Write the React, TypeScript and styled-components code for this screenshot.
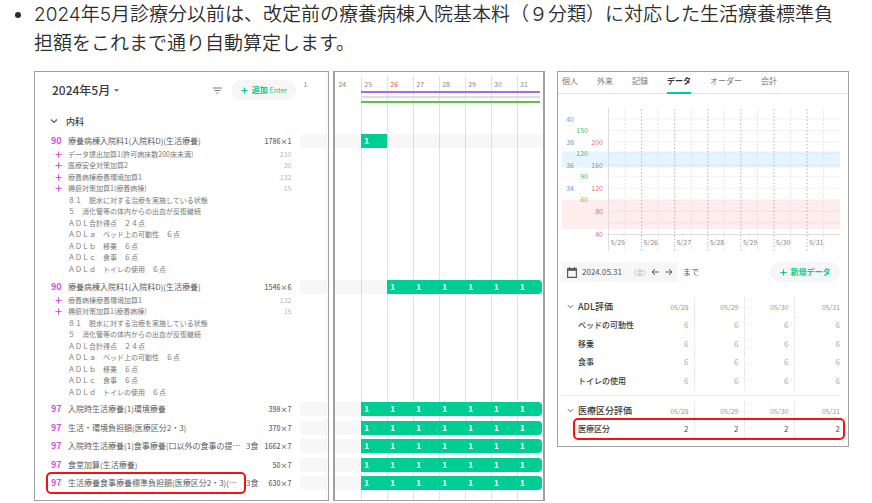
import React from "react";
import styled, { createGlobalStyle } from "styled-components";

const GREEN = "#00cd92";
const PINK = "#d64fe0";

const GlobalStyle = createGlobalStyle`
  * { box-sizing: border-box; }
  body {
    margin: 0;
    background: #fff;
    color: #3a3a3a;
    font-family: "Noto Sans CJK JP", sans-serif;
  }
  button, input { font: inherit; color: inherit; border: 0; padding: 0; margin: 0; background: none; }
  button { cursor: pointer; }
`;

/* ---------- page ---------- */

const Page = styled.main`
  padding: 0 23px 1px 34px;
`;

const NoteList = styled.ul`
  margin: 0 0 13px;
  padding: 0;
  font-family: Inter, "Noto Sans CJK JP", sans-serif;
  font-size: 19px;
  line-height: 29px;
  font-weight: 350;
  color: #2c2c2c;
`;

const Panels = styled.div`
  display: grid;
  grid-template-columns: minmax(0, 511fr) minmax(0, 292fr);
  align-items: start;
  gap: 12px;
`;

const OrderPanels = styled.div`
  display: grid;
  grid-template-columns: minmax(0, 296fr) minmax(0, 212fr);
  gap: 4px;
`;

const Panel = styled.section<{ $side?: number }>`
  border: 1px solid #a0a0a0;
  border-width: 1px ${(p) => p.$side ?? 1}px;
`;

const Highlight = styled.span<{ $inset: string }>`
  position: absolute;
  inset: ${(p) => p.$inset};
  border: 2px solid #f01414;
  border-radius: 5px;
  pointer-events: none;
`;

/* ---------- order list ---------- */

const OrderBody = styled.div`
  height: 100%;
  margin-right: 1px;
  padding-bottom: 10px;
  border-right: 1px solid #efefef;
`;

const OrderHeader = styled.header`
  display: flex;
  align-items: center;
  height: 36px;
  padding-left: 17px;
`;

const MonthButton = styled.button`
  display: flex;
  align-items: center;
  gap: 4px;
  margin-right: auto;
  font-size: 12px;
  line-height: 18px;
  font-weight: 500;
`;

const IconButton = styled.button`
  display: flex;
  align-items: center;
  justify-content: center;
  color: #777;
`;

const PillButton = styled.button<{ $width: number }>`
  display: flex;
  align-items: center;
  justify-content: center;
  gap: 4px;
  width: ${(p) => p.$width}px;
  height: 20px;
  border-radius: 10px;
  background: #f6f6f6;
  color: ${GREEN};
  font-size: 8px;
  line-height: 12px;
  font-weight: 700;
`;

const KeyHint = styled.small`
  font-size: 7px;
  font-weight: 400;
`;

const FilterSlot = styled.div`
  margin-right: 9px;
`;

const FirstDay = styled.span`
  width: 25px;
  margin-left: 5px;
  padding-left: 2px;
  height: 24px;
  font-size: 7px;
  line-height: 12px;
  color: #888;
`;

const Department = styled.h2`
  display: flex;
  align-items: center;
  gap: 8px;
  height: 26px;
  margin: 0;
  padding-left: 15px;
  font-size: 9px;
  font-weight: 500;
`;

const Orders = styled.ul`
  margin: 0;
  padding: 0;
  list-style: none;
`;

const OrderItem = styled.li`
  margin-top: 4px;
  &:first-child { margin-top: 0; }
  &:nth-child(even) { margin-top: 5px; }
`;

const OrderRow = styled.div`
  position: relative;
  display: flex;
  align-items: center;
  height: 14px;
  padding-left: 16px;
  font-size: 8px;
  line-height: 14px;
  white-space: nowrap;
`;

const Code = styled.span`
  width: 17px;
  color: ${PINK};
  font-size: 9px;
  font-weight: 700;
`;

const OrderName = styled.span`
  flex: 1;
  min-width: 0;
  color: #5c5c5c;
`;

const Count = styled.span`
  min-width: 33px;
  color: #666;
  font-size: 7px;
  font-weight: 500;
  text-align: right;
`;

const Meals = styled.span`
  color: #666;
`;

const DayStrip = styled.span`
  width: 26px;
  height: 14px;
  margin-left: 9px;
  border-radius: 3px 0 0 3px;
  background: #f7f7f7;
`;

const Details = styled.ul`
  margin: 0;
  padding: 0 35px 0 20px;
  list-style: none;
`;

const Detail = styled.li`
  display: flex;
  align-items: center;
  height: 12px;
  font-size: 7px;
  line-height: 11px;
  color: #777;
  white-space: pre;
  &:nth-child(even) { height: 11px; }
`;

const DetailMark = styled.span`
  display: flex;
  width: 13px;
  color: ${PINK};
`;

const Points = styled.span`
  margin-left: auto;
  color: #b5b5b5;
`;

/* ---------- calendar ---------- */

const Calendar = styled.div`
  display: grid;
  height: 100%;
`;

const DayColumns = styled.div`
  grid-area: 1 / 1;
  display: grid;
  grid-template-columns: repeat(8, 1fr);
  padding-top: 4px;
`;

const DayColumn = styled.div<{ $holiday?: boolean }>`
  padding-left: 2px;
  border-left: 1px solid #e3e3e3;
  font-size: 7px;
  line-height: 17px;
  color: ${(p) => (p.$holiday ? "#e05555" : "#888")};
  &:first-child { border-left-color: transparent; }
`;

const CalendarRows = styled.div`
  grid-area: 1 / 1;
  padding-top: 19px;
`;

const Periods = styled.div`
  display: grid;
  gap: 3px;
  height: 43px;
  align-content: start;
  margin: 0 3px 0 12.5%;
`;

const Period = styled.div<{ $color: string }>`
  height: 2px;
  background: ${(p) => p.$color};
`;

const CalendarRow = styled.div<{ $gap: number }>`
  display: grid;
  grid-template-columns: repeat(8, 1fr);
  height: 14px;
  margin-top: ${(p) => p.$gap}px;
  background: rgba(0, 0, 0, 0.03);
`;

const Dose = styled.span<{ $day: number; $last: boolean }>`
  grid-column: ${(p) => p.$day};
  grid-row: 1;
  padding-left: 3px;
  margin-right: ${(p) => (p.$last ? 1 : 0)}px;
  border-radius: ${(p) => (p.$last ? "0 4px 4px 0" : "0")};
  background: ${GREEN};
  color: #fff;
  font-size: 8px;
  line-height: 14px;
  font-weight: 700;
`;

/* ---------- data panel ---------- */

const Tabs = styled.nav`
  display: flex;
  gap: 19px;
  height: 22px;
  padding-left: 4px;
  border-bottom: 1px solid #e0e0e0;
`;

const Tab = styled.a<{ $active?: boolean }>`
  height: 22px;
  border-bottom: 2px solid ${(p) => (p.$active ? GREEN : "transparent")};
  color: ${(p) => (p.$active ? "#333" : "#777")};
  font-size: 8px;
  line-height: 17px;
  font-weight: ${(p) => (p.$active ? 700 : 400)};
  text-decoration: none;
  white-space: nowrap;
`;

const DataBody = styled.div`
  padding: 4px 8px 8px 4px;
`;

const Chart = styled.svg`
  display: block;
  width: 100%;
  height: auto;
  font-size: 7px;
`;

const DateBar = styled.div`
  display: flex;
  align-items: center;
  gap: 5px;
  margin: 10px 0 15px;
  font-size: 8px;
  line-height: 12px;
  color: #555;
`;

const DateField = styled.div`
  display: flex;
  align-items: center;
  height: 20px;
  padding: 0 5px;
  border-radius: 2px;
  background: #f6f6f6;
`;

const DateInput = styled.input`
  width: 52px;
  margin-left: 5px;
  height: 12px;
`;

const Weekday = styled.span`
  width: 17px;
  font-size: 7px;
  color: #bbb;
`;

const Arrows = styled.div`
  display: flex;
  gap: 6px;
`;

const Until = styled.span`
  margin-right: auto;
`;

const Table = styled.table`
  width: 100%;
  table-layout: fixed;
  border-collapse: collapse;
`;

const Divider = styled.hr`
  height: 1px;
  margin: 5px 0;
  border: 0;
  background: #ebebeb;
`;

const NameCol = styled.col``;
const DateCol = styled.col<{ $width: number }>`
  width: ${(p) => p.$width}px;
`;

const Row = styled.tr`
  position: relative;
  height: 18px;
  &:nth-child(even) { height: 19px; }
`;

const HeadRow = styled.tr`
  height: 19px;
`;

const GroupHead = styled.th`
  padding: 0;
  text-align: left;
  font-size: 9px;
  line-height: 14px;
  font-weight: 500;
`;

const GroupToggle = styled.button`
  display: flex;
  align-items: center;
  gap: 4px;
  padding-left: 5px;
  white-space: nowrap;
`;

const DateHead = styled.th`
  padding: 0 5px 0 0;
  border-right: 1px dotted #ddd;
  text-align: right;
  font-size: 7px;
  line-height: 12px;
  font-weight: 400;
  color: #999;
  &:last-child { padding-right: 0; border-right: 0; }
`;

const ItemHead = styled.th`
  padding: 0 0 0 16px;
  text-align: left;
  font-size: 8px;
  line-height: 12px;
  font-weight: 500;
  white-space: nowrap;
`;

const Value = styled.td<{ $strong?: boolean }>`
  padding: 0 5px 0 0;
  border-right: 1px dotted #ddd;
  text-align: right;
  font-size: 8px;
  line-height: 12px;
  color: ${(p) => (p.$strong ? "#555" : "#aaa")};
  &:last-child { padding-right: 0; border-right: 0; }
`;

/* ---------- icons ---------- */

const PlusIcon = ({ size, stroke = 1 }: { size: number; stroke?: number }) => (
  <svg width={size} height={size} viewBox="0 0 8 8" fill="none" stroke="currentColor" strokeWidth={stroke} aria-hidden="true">
    <path d="M4 0.5V7.5M0.5 4H7.5" />
  </svg>
);

const ChevronIcon = ({ size }: { size: number }) => (
  <svg width={size} height={size} viewBox="0 0 8 8" fill="none" stroke="#555" strokeWidth="1.1" aria-hidden="true">
    <path d="M1 2.5L4 5.5L7 2.5" />
  </svg>
);

const CaretIcon = () => (
  <svg width="5" height="3" viewBox="0 0 5 3" fill="#777" aria-hidden="true">
    <path d="M0 0H5L2.5 3Z" />
  </svg>
);

const FilterIcon = () => (
  <svg width="9" height="7" viewBox="0 0 9 7" fill="none" stroke="currentColor" strokeWidth="1" aria-hidden="true">
    <path d="M0 1H9M1.5 3.5H7.5M3.5 6H5.5" />
  </svg>
);

const CalendarIcon = () => (
  <svg width="10" height="11" viewBox="0 0 10 11" aria-hidden="true">
    <path d="M0.6 1.9H9.4V10.4H0.6Z" fill="none" stroke="#555" strokeWidth="1.1" />
    <path d="M0.3 1.5H9.7V3.8H0.3Z" fill="#555" />
    <path d="M2.5 0V2M7.5 0V2" stroke="#555" strokeWidth="1.1" />
  </svg>
);

const ArrowIcon = ({ left }: { left?: boolean }) => (
  <svg width="8" height="8" viewBox="0 0 8 8" fill="none" stroke="#555" strokeWidth="1" aria-hidden="true">
    <path d={left ? "M7.5 4H1M4 1L1 4L4 7" : "M0.5 4H7M4 1L7 4L4 7"} />
  </svg>
);

/* ---------- data ---------- */

type DetailData = { text: string; points?: number };
type OrderData = {
  code: number;
  name: string;
  count: string;
  meals?: string;
  details?: DetailData[];
  from: number;
  to: number;
  marked?: boolean;
};

const adl: DetailData[] = [
  { text: "８１　脱水に対する治療を実施している状態" },
  { text: "５　消化管等の体内からの出血が反復継続" },
  { text: "ＡＤＬ合計得点　２４点" },
  { text: "ＡＤＬａ　ベッド上の可動性　６点" },
  { text: "ＡＤＬｂ　移乗　６点" },
  { text: "ＡＤＬｃ　食事　６点" },
  { text: "ＡＤＬｄ　トイレの使用　６点" },
];

const orders: OrderData[] = [
  {
    code: 90,
    name: "療養病棟入院料1(入院料D)(生活療養)",
    count: "1786×1",
    from: 25,
    to: 25,
    details: [
      { text: "データ提出加算1(許可病床数200床未満)", points: 210 },
      { text: "医療安全対策加算2", points: 30 },
      { text: "療養病棟療養環境加算1", points: 132 },
      { text: "褥瘡対策加算1(療養病棟)", points: 15 },
      ...adl,
    ],
  },
  {
    code: 90,
    name: "療養病棟入院料1(入院料D)(生活療養)",
    count: "1546×6",
    from: 26,
    to: 31,
    details: [
      { text: "療養病棟療養環境加算1", points: 132 },
      { text: "褥瘡対策加算1(療養病棟)", points: 15 },
      ...adl,
    ],
  },
  { code: 97, name: "入院時生活療養(1)環境療養", count: "398×7", from: 25, to: 31 },
  { code: 97, name: "生活・環境負担額(医療区分2・3)", count: "370×7", from: 25, to: 31 },
  { code: 97, name: "入院時生活療養(1)食事療養(口以外の食事の提…", meals: "3食", count: "1662×7", from: 25, to: 31 },
  { code: 97, name: "食堂加算(生活療養)", count: "50×7", from: 25, to: 31 },
  { code: 97, name: "生活療養食事療養標準負担額(医療区分2・3)(…", meals: "3食", count: "630×7", from: 25, to: 31, marked: true },
];

const days = [24, 25, 26, 27, 28, 29, 30, 31];

/* Space above a calendar row, equal to the details listed under the previous order. */
const rowGap = (index: number) => {
  if (index === 0) return 0;
  const count = orders[index - 1].details?.length ?? 0;
  return Math.ceil(count / 2) * 12 + Math.floor(count / 2) * 11 + (index % 2 ? 5 : 4);
};

const axisLabels = [
  { x: 12, row: 0, text: "40", color: "#5a9ee8" },
  { x: 26, row: 1, text: "150", color: "#35bd85" },
  { x: 12, row: 2, text: "38", color: "#5a9ee8" },
  { x: 41, row: 2, text: "200", color: "#e86a6a" },
  { x: 26, row: 3, text: "120", color: "#35bd85" },
  { x: 12, row: 4, text: "36", color: "#5a9ee8" },
  { x: 41, row: 4, text: "160", color: "#c97a80" },
  { x: 26, row: 5, text: "90", color: "#35bd85" },
  { x: 12, row: 6, text: "34", color: "#5a9ee8" },
  { x: 41, row: 6, text: "120", color: "#e86a6a" },
  { x: 26, row: 7, text: "60", color: "#6db98c" },
  { x: 41, row: 8, text: "80", color: "#e86a6a" },
  { x: 41, row: 10, text: "40", color: "#e86a6a" },
];

const chartDates = ["5/25", "5/26", "5/27", "5/28", "5/29", "5/30", "5/31"];
const rowY = (row: number) => 21 + row * 11.55;
const dayX = (day: number) => 46.5 + day * 33.1;

/* ---------- components ---------- */

const VitalsChart = () => (
  <Chart viewBox="0 0 278 154" role="img" aria-label="バイタルグラフ">
    <rect x="0" y="53.5" width="278" height="16" fill="#e6f5fd" />
    <rect x="0" y="102" width="278" height="29" fill="#fdeeed" />
    {Array.from({ length: 11 }, (_, row) => (
      <path key={row} d={`M46 ${rowY(row)}H278`} stroke="#000" strokeOpacity={row === 10 ? 0.14 : 0.05} />
    ))}
    <path d="M46.5 10V153" stroke="#ddd" />
    {Array.from({ length: 13 }, (_, i) => (
      <path
        key={i}
        d={`M${dayX((i + 1) / 2)} 11V153`}
        stroke={i % 2 ? "#b4b4b4" : "#dcdcdc"}
        strokeDasharray="1.5 2"
      />
    ))}
    {axisLabels.map((label) => (
      <text key={`${label.x}-${label.row}`} x={label.x} y={rowY(label.row) + 2.5} textAnchor="end" fill={label.color}>
        {label.text}
      </text>
    ))}
    {chartDates.map((date, i) => (
      <text key={date} x={dayX(i) + 2} y="147" fill="#888">
        {date}
      </text>
    ))}
  </Chart>
);

type Item = { name: string; value: number; marked?: boolean };

const ScoreTable = ({ title, items }: { title: string; items: Item[] }) => (
  <Table>
    <colgroup>
      <NameCol />
      <DateCol $width={50} />
      <DateCol $width={50} />
      <DateCol $width={50} />
      <DateCol $width={46} />
    </colgroup>
    <thead>
      <HeadRow>
        <GroupHead scope="col">
          <GroupToggle type="button">
            <ChevronIcon size={7} />
            {title}
          </GroupToggle>
        </GroupHead>
        {["05/28", "05/29", "05/30", "05/31"].map((date) => (
          <DateHead key={date} scope="col">{date}</DateHead>
        ))}
      </HeadRow>
    </thead>
    <tbody>
      {items.map((item) => (
        <Row key={item.name}>
          <ItemHead scope="row">
            {item.name}
            {item.marked && <Highlight $inset="-2px -5px -2px 11px" />}
          </ItemHead>
          {[0, 1, 2, 3].map((i) => (
            <Value key={i} $strong={item.marked}>{item.value}</Value>
          ))}
        </Row>
      ))}
    </tbody>
  </Table>
);

const OrderPanel = () => (
  <Panel>
    <OrderBody>
      <OrderHeader>
        <MonthButton type="button">
          2024年5月
          <CaretIcon />
        </MonthButton>
        <FilterSlot>
          <IconButton type="button" aria-label="絞り込み">
            <FilterIcon />
          </IconButton>
        </FilterSlot>
        <PillButton type="button" $width={65}>
          <PlusIcon size={7} stroke={1.3} />
          <span>追加 <KeyHint>Enter</KeyHint></span>
        </PillButton>
        <FirstDay>1</FirstDay>
      </OrderHeader>
      <Department>
        <ChevronIcon size={8} />
        内科
      </Department>
      <Orders>
        {orders.map((order, i) => (
          <OrderItem key={i}>
            <OrderRow>
              <Code>{order.code}</Code>
              <OrderName>{order.name}</OrderName>
              {order.meals && <Meals>{order.meals}</Meals>}
              <Count>{order.count}</Count>
              <DayStrip />
              {order.marked && <Highlight $inset="-4px 80px -4px 11px" />}
            </OrderRow>
            {order.details && (
              <Details>
                {order.details.map((detail) => (
                  <Detail key={detail.text}>
                    <DetailMark>{detail.points !== undefined && <PlusIcon size={7} stroke={1.1} />}</DetailMark>
                    {detail.text}
                    {detail.points !== undefined && <Points>{detail.points}</Points>}
                  </Detail>
                ))}
              </Details>
            )}
          </OrderItem>
        ))}
      </Orders>
    </OrderBody>
  </Panel>
);

const CalendarPanel = () => (
  <Panel $side={2}>
    <Calendar>
      <DayColumns>
        {days.map((day) => (
          <DayColumn key={day} $holiday={day === 26}>{day}</DayColumn>
        ))}
      </DayColumns>
      <CalendarRows>
        <Periods>
          <Period $color="#a66bea" />
          <Period $color="#dcdce2" />
          <Period $color="#60c04c" />
        </Periods>
        {orders.map((order, i) => (
          <CalendarRow key={i} $gap={rowGap(i)}>
            {days
              .filter((day) => day >= order.from && day <= order.to)
              .map((day) => (
                <Dose key={day} $day={day - 23} $last={day === 31}>1</Dose>
              ))}
          </CalendarRow>
        ))}
      </CalendarRows>
    </Calendar>
  </Panel>
);

const DataPanel = () => (
  <Panel>
    <Tabs>
      {["個人", "外来", "記録", "データ", "オーダー", "会計"].map((tab) => (
        <Tab key={tab} href="#" $active={tab === "データ"}>{tab}</Tab>
      ))}
    </Tabs>
    <DataBody>
      <VitalsChart />
      <DateBar>
        <DateField>
          <CalendarIcon />
          <DateInput type="text" defaultValue="2024.05.31" aria-label="表示終了日" />
          <Weekday>(金)</Weekday>
          <Arrows>
            <IconButton type="button" aria-label="前の日"><ArrowIcon left /></IconButton>
            <IconButton type="button" aria-label="次の日"><ArrowIcon /></IconButton>
          </Arrows>
        </DateField>
        <Until>まで</Until>
        <PillButton type="button" $width={70}>
          <PlusIcon size={7} stroke={1.3} />
          新規データ
        </PillButton>
      </DateBar>
      <ScoreTable
        title="ADL評価"
        items={[
          { name: "ベッドの可動性", value: 6 },
          { name: "移乗", value: 6 },
          { name: "食事", value: 6 },
          { name: "トイレの使用", value: 6 },
        ]}
      />
      <Divider />
      <ScoreTable title="医療区分評価" items={[{ name: "医療区分", value: 2, marked: true }]} />
    </DataBody>
  </Panel>
);

export default function App() {
  return (
    <Page>
      <GlobalStyle />
      <NoteList>
        <li>
          2024年5月診療分以前は、改定前の療養病棟入院基本料（９分類）に対応した生活療養標準負担額をこれまで通り自動算定します。
        </li>
      </NoteList>
      <Panels>
        <OrderPanels>
          <OrderPanel />
          <CalendarPanel />
        </OrderPanels>
        <DataPanel />
      </Panels>
    </Page>
  );
}
